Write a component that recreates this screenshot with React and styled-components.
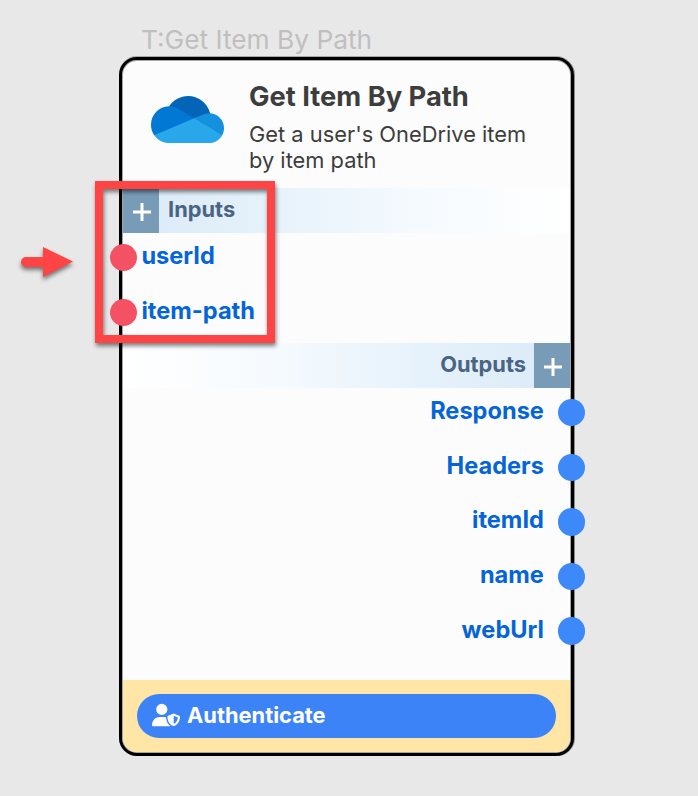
import React from "react";
import styled, { createGlobalStyle } from "styled-components";
import { FaUserShield } from "react-icons/fa6";

const GlobalStyle = createGlobalStyle`
  * { box-sizing: border-box; }
  body {
    margin: 0;
    background: #e8e8e8;
    font-family: Inter, "Liberation Sans", sans-serif;
  }
`;

const Canvas = styled.main`
  position: relative;
  width: 698px;
  height: 796px;
  padding: 23px 0 0 119px;
  overflow: hidden;
  background: #e8e8e8;
`;

const NodeTag = styled.div`
  height: 34px;
  padding-left: 22px;
  font-size: 26.3px;
  line-height: 34px;
  color: #bfbfbf;
  white-space: nowrap;
`;

const NodeCard = styled.section`
  display: flex;
  flex-direction: column;
  width: 455px;
  height: 699px;
  padding: 1px;
  border: 3px solid #000;
  border-radius: 18px;
  background: #fcfcfc;
  box-shadow: inset 0 0 0 1px #a5a5a5, 0 -1px 0 #a8a8a8, 1px 0 0 #8c8c8c;
`;

const Header = styled.header`
  display: flex;
  height: 127px;
  padding: 20px 0 0 28px;
`;

const Logo = styled.svg`
  flex: none;
  width: 73px;
  height: 47px;
  margin-top: 15px;
`;

const Heading = styled.div`
  margin-left: 25px;
`;

const Title = styled.h1`
  margin: 0;
  font-size: 27.3px;
  line-height: 32px;
  font-weight: 700;
  color: #3d3d3d;
  white-space: nowrap;
`;

const Description = styled.p`
  width: 300px;
  margin: 8px 0 0;
  font-size: 21.85px;
  line-height: 26px;
  color: #3d3d3d;
`;

const SectionBar = styled.div`
  display: flex;
  flex: none;
  flex-direction: ${(p) => (p.$end ? "row-reverse" : "row")};
  height: 45px;
  background: linear-gradient(
    ${(p) => (p.$end ? "to left" : "to right")},
    #d9eaf7,
    #e6f2fb 33%,
    #f5fafe 66%,
    #fff
  );
`;

const AddButton = styled.button`
  display: grid;
  place-items: center;
  width: 36px;
  height: 45px;
  padding: 0;
  border: 0;
  background: #789cb8;
`;

const PlusIcon = styled.svg`
  width: 18px;
  height: 18px;
  margin: 3px 0 0 1px;
`;

const SectionLabel = styled.span`
  padding: 0 ${(p) => (p.$end ? 8 : 9)}px;
  font-size: 21.85px;
  line-height: 43px;
  font-weight: 700;
  color: #4a6484;
`;

const InputList = styled.div`
  height: 110px;
`;

const OutputList = styled.div`
  flex: 1;
`;

const Port = styled.div`
  display: flex;
  align-items: center;
  flex-direction: ${(p) => (p.$end ? "row-reverse" : "row")};
  gap: ${(p) => (p.$end ? 14 : 4)}px;
  height: ${(p) => (p.$end ? 54.6 : 55)}px;
  margin: ${(p) => (p.$end ? "0 -15.3px 0 0" : "0 0 0 -13px")};
`;

const PortDot = styled.i`
  flex: none;
  width: 27.4px;
  height: 27.4px;
  margin-top: ${(p) => (p.$end ? -5 : -6)}px;
  border-radius: 50%;
  background: ${(p) => (p.$end ? "#3d89fa" : "#f45164")};
`;

const PortLabel = styled.span`
  margin-top: ${(p) => (p.$end ? -8 : -9)}px;
  font-size: 23.6px;
  line-height: 30px;
  font-weight: 700;
  color: #0565d8;
  white-space: nowrap;
`;

const Footer = styled.footer`
  height: 72px;
  padding: 14px 14px 0;
  border-radius: 0 0 14px 14px;
  background: #ffe6a7;
`;

const AuthButton = styled.button`
  display: flex;
  align-items: center;
  gap: 7px;
  width: 419px;
  height: 44px;
  padding: 0 0 2px 15px;
  border: 0;
  border-radius: 22px;
  background: #3d83f8;
  font-family: inherit;
  font-size: 21.85px;
  font-weight: 700;
  color: #fff;
`;

const Highlight = styled.div`
  position: absolute;
  left: 95px;
  top: 181px;
  width: 180px;
  height: 162px;
  border: 8px solid #fe4444;
  filter: drop-shadow(1px 3px 2px rgba(0, 0, 0, 0.5));
`;

const Arrow = styled.svg`
  position: absolute;
  left: 21px;
  top: 246px;
  width: 53px;
  height: 32px;
  overflow: visible;
  filter: drop-shadow(0 3px 2px rgba(0, 0, 0, 0.5));
`;

const inputs = ["userId", "item-path"];
const outputs = ["Response", "Headers", "itemId", "name", "webUrl"];

function CloudLogo() {
  return (
    <Logo viewBox="0 0 1030.04 659.922" preserveAspectRatio="none">
      <path fill="#0364B8" d="M622.292,445.338l212.613-203.327C790.741,69.804,615.338-33.996,443.13,10.168C365.58,30.056,298.224,78.13,254.209,144.005C257.5,143.922,622.292,445.338,622.292,445.338z" />
      <path fill="#0078D4" d="M392.776,183.283l-0.01,0.035c-40.626-25.162-87.479-38.462-135.267-38.397c-1.104,0-2.189,0.07-3.291,0.083C112.064,146.765-1.74,263.423,0.02,405.567c0.638,51.562,16.749,101.743,46.244,144.04l318.528-39.894l244.209-196.915L392.776,183.283z" />
      <path fill="#1490DF" d="M834.905,242.012c-4.674-0.312-9.371-0.528-14.123-0.528c-28.523-0.028-56.749,5.798-82.93,17.117l-0.006-0.022l-128.844,54.22l142.041,175.456l253.934,61.728c54.799-101.732,16.752-228.625-84.98-283.424c-26.287-14.16-55.301-22.529-85.091-24.546V242.012z" />
      <path fill="#28A8EA" d="M46.264,549.607C94.359,618.756,173.27,659.966,257.5,659.922h563.281c76.946,0.022,147.691-42.202,184.195-109.937L609.001,312.798L46.264,549.607z" />
    </Logo>
  );
}

function Plus() {
  return (
    <PlusIcon viewBox="0 0 18 18">
      <path d="M9 0v18M0 9h18" stroke="#fff" strokeWidth="3" />
    </PlusIcon>
  );
}

function Section({ label, end }) {
  return (
    <SectionBar $end={end}>
      <AddButton aria-label={`Add to ${label}`}>
        <Plus />
      </AddButton>
      <SectionLabel $end={end}>{label}</SectionLabel>
    </SectionBar>
  );
}

function PortRow({ name, end }) {
  return (
    <Port $end={end}>
      <PortDot $end={end} />
      <PortLabel $end={end}>{name}</PortLabel>
    </Port>
  );
}

export default function App() {
  return (
    <>
      <GlobalStyle />
      <Canvas>
        <NodeTag>T:Get Item By Path</NodeTag>
        <NodeCard>
          <Header>
            <CloudLogo />
            <Heading>
              <Title>Get Item By Path</Title>
              <Description>Get a user's OneDrive item by item path</Description>
            </Heading>
          </Header>
          <Section label="Inputs" />
          <InputList>
            {inputs.map((name) => (
              <PortRow key={name} name={name} />
            ))}
          </InputList>
          <Section label="Outputs" end />
          <OutputList>
            {outputs.map((name) => (
              <PortRow key={name} name={name} end />
            ))}
          </OutputList>
          <Footer>
            <AuthButton>
              <FaUserShield size={28} />
              Authenticate
            </AuthButton>
          </Footer>
        </NodeCard>
        <Highlight />
        <Arrow viewBox="0 0 53 32">
          <path fill="#fe4444" d="M5 11H22V1L52 15.500L22 31V21H5A5 5 0 0 1 5 11Z" />
        </Arrow>
      </Canvas>
    </>
  );
}
